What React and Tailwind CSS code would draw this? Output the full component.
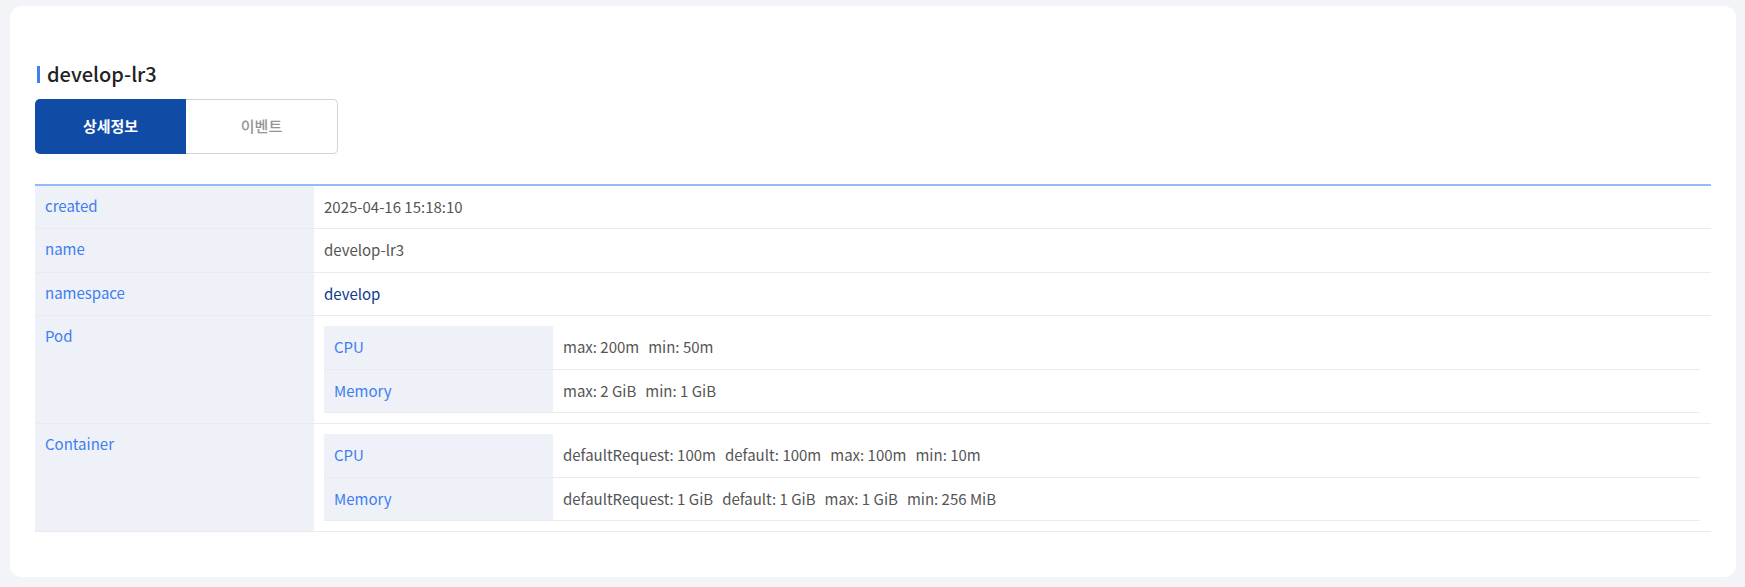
const font = { fontFamily: '"Noto Sans CJK KR", "Noto Sans", sans-serif' };

const InfoRow = ({ label, children, nested, tall }) => (
    <div className="flex border-b border-[#ebebeb]">
        <div className="w-[279px] shrink-0 bg-[#eef1f8] pl-[10px] pt-[10px] text-[15px] leading-5 text-[#3f7ef0]">
            {label}
        </div>
        {nested ? (
            <div className="flex-1 pl-[10px] pr-[11px] pt-[10px] pb-[10px]">{children}</div>
        ) : (
            <div className={tall ? "flex-1 flex items-center pl-[10px] h-[43px] text-[15px]" : "flex-1 flex items-center pl-[10px] h-[42px] text-[15px]"}>
                {children}
            </div>
        )}
    </div>
);

const LimitTable = ({ rows }) => (
    <div>
        {rows.map((row, i) => (
            <div key={row.label} className={i === 0 ? "flex h-[43px] border-b border-[#ebebeb] box-content" : "flex h-[42px] border-b border-[#ebebeb] box-content"}>
                <div className="w-[229px] shrink-0 bg-[#eef1f8] pl-[10px] flex items-center text-[15px] text-[#3f7ef0]">
                    {row.label}
                </div>
                <div className="flex-1 flex items-center pl-[10px] gap-[9px] text-[15px] text-[#555]">
                    {row.values.map((v) => (
                        <span key={v}>{v}</span>
                    ))}
                </div>
            </div>
        ))}
    </div>
);

export default function App() {
    const podLimits = [
        { label: "CPU", values: ["max: 200m", "min: 50m"] },
        { label: "Memory", values: ["max: 2 GiB", "min: 1 GiB"] },
    ];
    const containerLimits = [
        { label: "CPU", values: ["defaultRequest: 100m", "default: 100m", "max: 100m", "min: 10m"] },
        { label: "Memory", values: ["defaultRequest: 1 GiB", "default: 1 GiB", "max: 1 GiB", "min: 256 MiB"] },
    ];

    return (
        <div className="min-h-screen bg-[#f3f4f8] pt-[6px] pl-[10px] pr-[9px] pb-[10px]" style={font}>
            <div className="bg-white rounded-[12px] h-[571px] pt-[54px] pl-[25px] pr-[25px]">
                <div className="flex items-center h-[28px]">
                    <span className="ml-[2px] w-[3px] h-[17px] bg-[#3b82f6]"></span>
                    <h2 className="ml-[7px] text-[20px] font-medium text-[#222]">develop-lr3</h2>
                </div>

                <div className="flex mt-[11px] w-[303px] h-[55px]">
                    <button className="w-[151px] rounded-l-[5px] bg-[#104ca6] text-white text-[15px] font-bold">
                        상세정보
                    </button>
                    <button className="flex-1 rounded-r-[5px] border border-l-0 border-[#d3d3d3] bg-white text-[#949494] text-[15px] font-medium">
                        이벤트
                    </button>
                </div>

                <div className="mt-[30px] border-t-2 border-[#93bbf5]">
                    <InfoRow label="created">
                        <span className="text-[#555]">2025-04-16 15:18:10</span>
                    </InfoRow>
                    <InfoRow label="name" tall>
                        <span className="text-[#555]">develop-lr3</span>
                    </InfoRow>
                    <InfoRow label="namespace">
                        <span className="text-[#0d3a8a]">develop</span>
                    </InfoRow>
                    <InfoRow label="Pod" nested>
                        <LimitTable rows={podLimits} />
                    </InfoRow>
                    <InfoRow label="Container" nested>
                        <LimitTable rows={containerLimits} />
                    </InfoRow>
                </div>
            </div>
        </div>
    );
}
